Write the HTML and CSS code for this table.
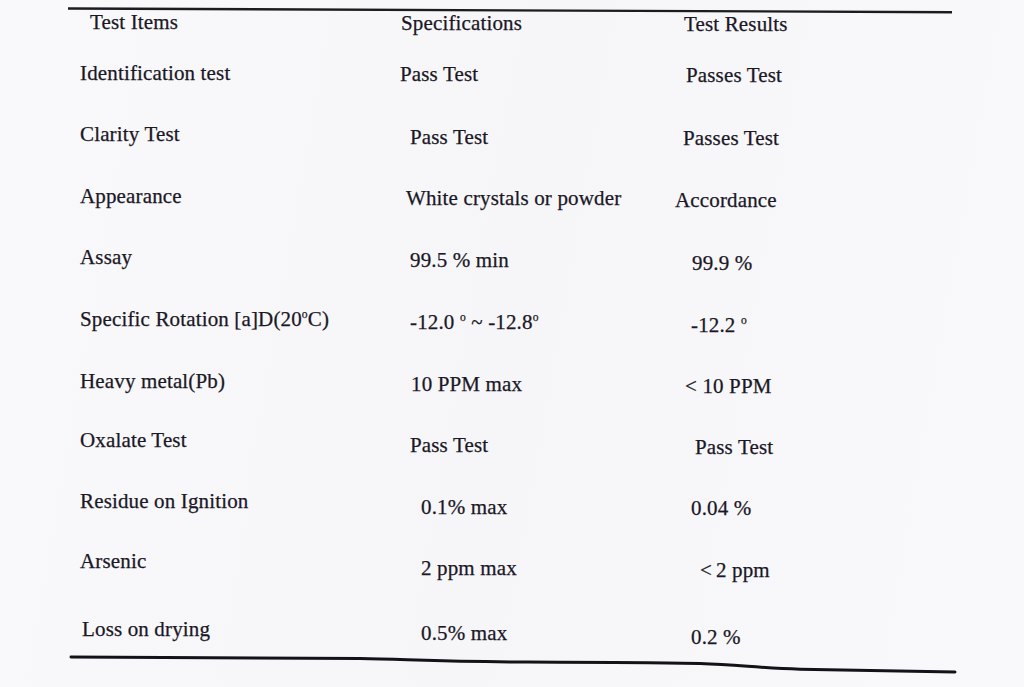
FILE: index.html
```html
<!DOCTYPE html>
<html lang="en">
<head>
<meta charset="utf-8">
<title>Test Results</title>
<link rel="stylesheet" href="styles.css">
</head>
<body>
<div class="sheet">
  <svg class="rule rule-top" width="1024" height="10" viewBox="0 0 1024 10">
    <path d="M68 8.5 C 300 9, 600 10.5, 952 12.2" fill="none" stroke="#1d1b20" stroke-width="2.4"/>
  </svg>
  <div class="table">
    <div class="row head">
      <div class="c ml10 pt0">Test Items</div>
      <div class="c ml1 pt1">Specifications</div>
      <div class="c ml9 pt2">Test Results</div>
    </div>
    <div class="row">
      <div class="c pt0">Identification test</div>
      <div class="c pt1">Pass Test</div>
      <div class="c ml11 pt2">Passes Test</div>
    </div>
    <div class="row">
      <div class="c pt0">Clarity Test</div>
      <div class="c ml10 pt3">Pass Test</div>
      <div class="c ml8 pt4">Passes Test</div>
    </div>
    <div class="row">
      <div class="c pt1">Appearance</div>
      <div class="c ml6 pt3">White crystals or powder</div>
      <div class="c pt5">Accordance</div>
    </div>
    <div class="row">
      <div class="c pt1">Assay</div>
      <div class="c ml10 pt4">99.5 % min</div>
      <div class="c ml17 pt7">99.9 %</div>
    </div>
    <div class="row">
      <div class="c pt2">Specific Rotation [a]D(20<sup class="deg">o</sup>C)</div>
      <div class="c ml10 pt5">-12.0 <sup class="deg">o</sup> ~ -12.8<sup class="deg">o</sup></div>
      <div class="c ml16 pt8">-12.2 <sup class="deg">o</sup></div>
    </div>
    <div class="row">
      <div class="c pt3">Heavy metal(Pb)</div>
      <div class="c ml11 pt6">10 PPM max</div>
      <div class="c ml10 pt8">&lt; 10 PPM</div>
    </div>
    <div class="row">
      <div class="c pt1">Oxalate Test</div>
      <div class="c ml10 pt6">Pass Test</div>
      <div class="c ml20 pt8">Pass Test</div>
    </div>
    <div class="row">
      <div class="c pt1">Residue on Ignition</div>
      <div class="c ml21 pt7">0.1% max</div>
      <div class="c ml16 pt8">0.04 %</div>
    </div>
    <div class="row">
      <div class="c pt0">Arsenic</div>
      <div class="c ml21 pt7">2 ppm max</div>
      <div class="c ml25 pt9">&lt;<span class="gap"></span>2 ppm</div>
    </div>
    <div class="row last">
      <div class="c ml2 pt7">Loss on drying</div>
      <div class="c ml21 pt11">0.5% max</div>
      <div class="c ml16 pt15">0.2 %</div>
    </div>
  </div>
  <svg class="rule rule-bottom" width="1024" height="37" viewBox="0 650 1024 37">
    <path d="M71 657 C 200 657, 300 657.5, 360 658.5 C 410 659.5, 440 661.5, 520 662 C 600 662.3, 660 662.5, 700 663.5 C 740 665, 760 668, 800 669.2 C 880 670.8, 920 671.5, 955 672" fill="none" stroke="#141218" stroke-width="3" stroke-linecap="round"/>
  </svg>
</div>
</body>
</html>
```

FILE: styles.css
```css
* {
  box-sizing: border-box;
}

html, body {
  margin: 0;
  padding: 0;
}

body {
  background: #f8f7f9;
  color: #1a1826;
  font-family: "Liberation Serif", "Times New Roman", serif;
  font-size: 21px;
  line-height: 24px;
  letter-spacing: 0.15px;
  -webkit-text-stroke: 0.25px #1a1826;
}

.sheet {
  width: 1024px;
  height: 687px;
  overflow: hidden;
  background: linear-gradient(100deg, #f9f8fa 0%, #f6f5f8 50%, #f9f8fb 100%);
}

.rule {
  display: block;
  overflow: visible;
}

.table {
  padding-left: 80px;
}

.row {
  display: grid;
  grid-template-columns: 320px 275px 1fr;
  height: 61px;
}

.row.head {
  height: 51px;
}

.row.last {
  height: 40px;
}

.c {
  white-space: nowrap;
}

.deg {
  font-size: 0.55em;
  line-height: 0;
  vertical-align: 0.7em;
}

.gap {
  display: inline-block;
  width: 4px;
}

.ml1 { margin-left: 1px; }
.ml2 { margin-left: 2px; }
.ml6 { margin-left: 6px; }
.ml8 { margin-left: 8px; }
.ml9 { margin-left: 9px; }
.ml10 { margin-left: 10px; }
.ml11 { margin-left: 11px; }
.ml16 { margin-left: 16px; }
.ml17 { margin-left: 17px; }
.ml20 { margin-left: 20px; }
.ml21 { margin-left: 21px; }
.ml25 { margin-left: 25px; }

.pt0 { padding-top: 0; }
.pt1 { padding-top: 1px; }
.pt2 { padding-top: 2px; }
.pt3 { padding-top: 3px; }
.pt4 { padding-top: 4px; }
.pt5 { padding-top: 5px; }
.pt6 { padding-top: 6px; }
.pt7 { padding-top: 7px; }
.pt8 { padding-top: 8px; }
.pt9 { padding-top: 9px; }
.pt11 { padding-top: 11px; }
.pt15 { padding-top: 15px; }
```
